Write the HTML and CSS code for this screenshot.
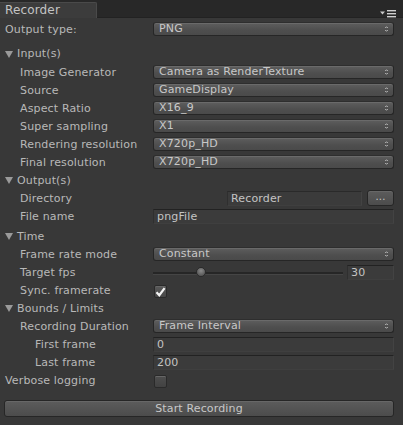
FILE: index.html
```html
<!DOCTYPE html>
<html>
<head>
<meta charset="utf-8">
<link rel="stylesheet" href="styles.css">
</head>
<body>
<div class="tabbar">
  <div class="tab">Recorder</div>
  <div class="tabmenu">
    <svg width="17" height="9" viewBox="0 0 17 9"><path d="M0 2.5h5l-2.5 3z" fill="#c8c8c8"/><rect x="7" y="1" width="9" height="1.4" fill="#d0d0d0"/><rect x="7" y="4" width="9" height="1.4" fill="#d0d0d0"/><rect x="7" y="7" width="9" height="1.4" fill="#d0d0d0"/></svg>
  </div>
</div>
<div class="panel">
  <div class="row first">
    <div class="label l0">Output type:</div>
    <div class="ctl"><div class="dd">PNG<span class="arr"></span></div></div>
  </div>

  <div class="row fold gap6 tall"><span class="tri"></span>Input(s)</div>
  <div class="row"><div class="label l1">Image Generator</div><div class="ctl"><div class="dd">Camera as RenderTexture<span class="arr"></span></div></div></div>
  <div class="row"><div class="label l1">Source</div><div class="ctl"><div class="dd">GameDisplay<span class="arr"></span></div></div></div>
  <div class="row"><div class="label l1">Aspect Ratio</div><div class="ctl"><div class="dd">X16_9<span class="arr"></span></div></div></div>
  <div class="row"><div class="label l1">Super sampling</div><div class="ctl"><div class="dd">X1<span class="arr"></span></div></div></div>
  <div class="row"><div class="label l1">Rendering resolution</div><div class="ctl"><div class="dd">X720p_HD<span class="arr"></span></div></div></div>
  <div class="row"><div class="label l1">Final resolution</div><div class="ctl"><div class="dd">X720p_HD<span class="arr"></span></div></div></div>

  <div class="row fold"><span class="tri"></span>Output(s)</div>
  <div class="row"><div class="label l1">Directory</div>
    <div class="ctl dir"><div class="tf dirfield">Recorder</div><div class="btn small">...</div></div>
  </div>
  <div class="row"><div class="label l1">File name</div><div class="ctl"><div class="tf">pngFile</div></div></div>

  <div class="row fold gap2"><span class="tri"></span>Time</div>
  <div class="row"><div class="label l1">Frame rate mode</div><div class="ctl"><div class="dd">Constant<span class="arr"></span></div></div></div>
  <div class="row"><div class="label l1">Target fps</div>
    <div class="ctl slider"><div class="track"><span class="thumb"></span></div><div class="tf num">30</div></div>
  </div>
  <div class="row"><div class="label l1">Sync. framerate</div><div class="ctl"><div class="cb on"><svg width="11" height="10" viewBox="0 0 11 10"><path d="M1.5 5.2l2.8 3 5.3-7" fill="none" stroke="#f4f4f4" stroke-width="2.2"/></svg></div></div></div>

  <div class="row fold"><span class="tri"></span>Bounds / Limits</div>
  <div class="row"><div class="label l1">Recording Duration</div><div class="ctl"><div class="dd">Frame Interval<span class="arr"></span></div></div></div>
  <div class="row"><div class="label l2">First frame</div><div class="ctl"><div class="tf">0</div></div></div>
  <div class="row"><div class="label l2">Last frame</div><div class="ctl"><div class="tf">200</div></div></div>
  <div class="row"><div class="label l0">Verbose logging</div><div class="ctl"><div class="cb"></div></div></div>

  <div class="startrow"><div class="btn start">Start Recording</div></div>
</div>
</body>
</html>
```
FILE: styles.css
```css
html, body {
  margin: 0;
  padding: 0;
  background: #383838;
  width: 403px;
  height: 425px;
  overflow: hidden;
  font-family: "DejaVu Sans", Verdana, sans-serif;
  font-size: 11px;
  letter-spacing: 0.15px;
  color: #b8b8b8;
}

.tabbar {
  height: 18px;
  background: #282828;
  border-bottom: 1px solid #222;
  box-sizing: border-box;
  display: flex;
  align-items: flex-end;
  justify-content: space-between;
}

.tab {
  width: 97px;
  height: 16px;
  box-sizing: border-box;
  background: #3c3c3c;
  border: 1px solid #4a4a4a;
  border-left: none;
  border-bottom: none;
  border-radius: 0 2px 0 0;
  padding-left: 5px;
  font-size: 12px;
  line-height: 15px;
  color: #c4c4c4;
  margin-bottom: -1px;
}

.tabmenu {
  align-self: flex-start;
  padding: 9px 6px 0 0;
  line-height: 0;
}

.panel {
  display: flex;
  flex-direction: column;
}

.row {
  display: flex;
  align-items: center;
  height: 18px;
  padding-right: 9px;
  white-space: nowrap;
}

.row.first { margin-top: 2px; }
.row.gap6 { margin-top: 6px; }
.row.gap2 { margin-top: 2px; }
.row.tall { height: 19px; }

.label {
  width: 153px;
  flex: none;
  box-sizing: border-box;
  overflow: hidden;
  padding-top: 1px;
}
.l0 { padding-left: 5px; }
.l1 { padding-left: 20px; }
.l2 { padding-left: 35px; }

.fold {
  padding-left: 5px;
  font-size: 11px;
}

.tri {
  width: 0;
  height: 0;
  border-left: 4px solid transparent;
  border-right: 4px solid transparent;
  border-top: 7px solid #9a9a9a;
  margin-right: 4px;
  margin-top: 1px;
}

.ctl {
  flex: 1;
  display: flex;
  align-items: center;
  min-width: 0;
}

.dd {
  position: relative;
  flex: 1;
  height: 14px;
  box-sizing: border-box;
  border: 1px solid #262626;
  border-top-color: #2e2e2e;
  border-radius: 3px;
  background: linear-gradient(#5e5e5e, #4e4e4e 60%, #4a4a4a);
  box-shadow: inset 0 1px 0 #6a6a6a;
  padding-left: 5px;
  line-height: 12px;
  font-size: 11px;
  color: #c8c8c8;
}

.arr {
  position: absolute;
  right: 5px;
  top: 3px;
  width: 3px;
  height: 6px;
  background:
    linear-gradient(to bottom right, transparent 50%, #a8a8a8 50%) 0 0 / 1.5px 2px no-repeat,
    linear-gradient(to bottom left, transparent 50%, #a8a8a8 50%) 1.5px 0 / 1.5px 2px no-repeat,
    linear-gradient(to top right, transparent 50%, #a8a8a8 50%) 0 4px / 1.5px 2px no-repeat,
    linear-gradient(to top left, transparent 50%, #a8a8a8 50%) 1.5px 4px / 1.5px 2px no-repeat;
}

.tf {
  flex: 1;
  height: 15px;
  box-sizing: border-box;
  background: #3b3b3b;
  border-top: 1px solid #222;
  border-left: 1px solid #2f2f2f;
  border-right: 1px solid #434343;
  border-bottom: 1px solid #3f3f3f;
  padding-left: 3px;
  line-height: 13px;
  color: #c4c4c4;
  font-size: 11px;
}

.dir { padding-left: 74px; }
.dirfield {
  flex: none;
  width: 135px;
  border-top-color: #2a2a2a;
}

.btn {
  box-sizing: border-box;
  border: 1px solid #262626;
  border-radius: 3px;
  background: linear-gradient(#5c5c5c, #4c4c4c);
  box-shadow: inset 0 1px 0 #676767;
  color: #c8c8c8;
  text-align: center;
}

.btn.small {
  width: 28px;
  height: 16px;
  margin-left: 5px;
  line-height: 12px;
  font-size: 10px;
}

.slider {
  gap: 4px;
}
.track {
  position: relative;
  width: 190px;
  height: 2px;
  background: #262626;
  border-bottom: 1px solid #454545;
  margin-top: 2px;
}
.thumb {
  position: absolute;
  left: 43px;
  top: -5px;
  width: 10px;
  height: 10px;
  border-radius: 50%;
  background: radial-gradient(circle at 50% 35%, #8a8a8a, #5a5a5a 70%);
  border: 1px solid #2a2a2a;
  box-sizing: border-box;
}
.tf.num {
  flex: none;
  width: 47px;
  height: 15px;
}

.cb {
  width: 13px;
  height: 13px;
  box-sizing: border-box;
  border: 1px solid #2a2a2a;
  border-radius: 2px;
  background: linear-gradient(#5a5a5a, #474747);
  box-shadow: inset 0 1px 0 #666;
  display: flex;
  align-items: center;
  justify-content: center;
  margin-left: 1px;
}
.cb.on {
  margin-top: 3px;
}
.cb:not(.on) {
  background: linear-gradient(#4e4e4e, #424242);
  margin-top: 2px;
}

.startrow {
  display: flex;
  padding: 0 9px 0 4px;
  margin-top: 11px;
}
.btn.start {
  flex: 1;
  height: 17px;
  line-height: 15px;
  font-size: 11px;
}
```
